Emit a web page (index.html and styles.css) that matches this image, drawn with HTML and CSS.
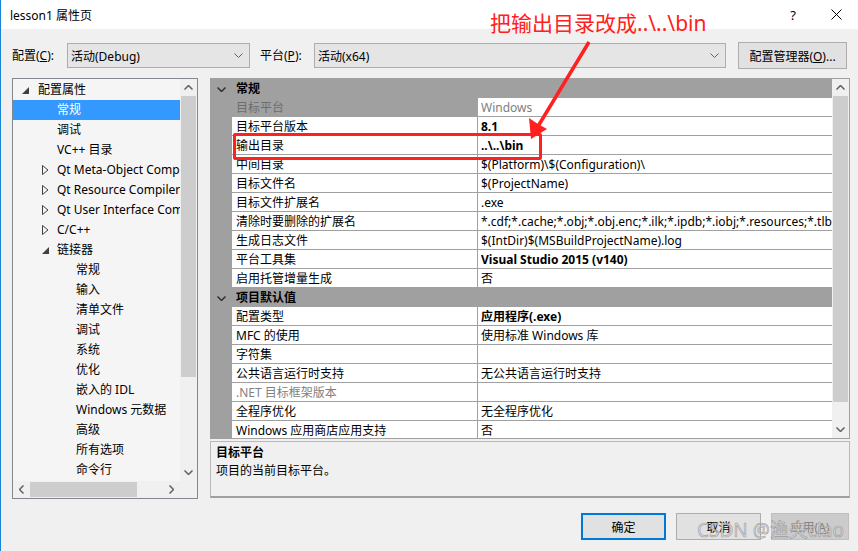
FILE: index.html
```html
<!DOCTYPE html>
<html lang="zh-CN">
<head>
    <meta charset="UTF-8">
    <title>lesson1 属性页</title>
    <link rel="stylesheet" href="styles.css">
</head>
<body>
<div class="window">
    <!-- 标题栏 -->
    <div class="titlebar">
        <span class="title">lesson1 属性页</span>
        <span class="help">?</span>
        <svg class="close" width="11" height="11" viewBox="0 0 11 11"><path d="M0.5 0.5 L10.5 10.5 M10.5 0.5 L0.5 10.5" stroke="#000" stroke-width="1"/></svg>
    </div>

    <!-- 配置 / 平台 -->
    <div class="toolbar">
        <span class="label label-config">配置(<u>C</u>):</span>
        <div class="combo combo-config">
            <span>活动(Debug)</span>
            <svg class="chev" width="9" height="5" viewBox="0 0 9 5"><path d="M0.5 0.5 L4.5 4.5 L8.5 0.5" fill="none" stroke="#606060"/></svg>
        </div>
        <span class="label label-platform">平台(<u>P</u>):</span>
        <div class="combo combo-platform">
            <span>活动(x64)</span>
            <svg class="chev" width="9" height="5" viewBox="0 0 9 5"><path d="M0.5 0.5 L4.5 4.5 L8.5 0.5" fill="none" stroke="#606060"/></svg>
        </div>
        <button class="btn btn-manager">配置管理器(<u>O</u>)...</button>
    </div>

    <div class="main">
        <!-- 左侧树 -->
        <div class="tree">
            <div class="tree-body">
                <ul class="tree-list">
                    <li class="lv1"><span class="exp"><svg width="7" height="7" viewBox="0 0 7 7"><path d="M7 0 L7 7 L0 7 Z" fill="#404040"/></svg></span>配置属性</li>
                    <li class="lv2 selected"><span class="exp"></span>常规</li>
                    <li class="lv2"><span class="exp"></span>调试</li>
                    <li class="lv2"><span class="exp"></span>VC++ 目录</li>
                    <li class="lv2"><span class="exp"><svg width="7" height="10" viewBox="0 0 7 10"><path d="M0.5 0.5 L6 5 L0.5 9.5 Z" fill="none" stroke="#404040"/></svg></span>Qt Meta-Object Compiler</li>
                    <li class="lv2"><span class="exp"><svg width="7" height="10" viewBox="0 0 7 10"><path d="M0.5 0.5 L6 5 L0.5 9.5 Z" fill="none" stroke="#404040"/></svg></span>Qt Resource Compiler</li>
                    <li class="lv2"><span class="exp"><svg width="7" height="10" viewBox="0 0 7 10"><path d="M0.5 0.5 L6 5 L0.5 9.5 Z" fill="none" stroke="#404040"/></svg></span>Qt User Interface Compiler</li>
                    <li class="lv2"><span class="exp"><svg width="7" height="10" viewBox="0 0 7 10"><path d="M0.5 0.5 L6 5 L0.5 9.5 Z" fill="none" stroke="#404040"/></svg></span>C/C++</li>
                    <li class="lv2"><span class="exp"><svg width="7" height="7" viewBox="0 0 7 7"><path d="M7 0 L7 7 L0 7 Z" fill="#404040"/></svg></span>链接器</li>
                    <li class="lv3"><span class="exp"></span>常规</li>
                    <li class="lv3"><span class="exp"></span>输入</li>
                    <li class="lv3"><span class="exp"></span>清单文件</li>
                    <li class="lv3"><span class="exp"></span>调试</li>
                    <li class="lv3"><span class="exp"></span>系统</li>
                    <li class="lv3"><span class="exp"></span>优化</li>
                    <li class="lv3"><span class="exp"></span>嵌入的 IDL</li>
                    <li class="lv3"><span class="exp"></span>Windows 元数据</li>
                    <li class="lv3"><span class="exp"></span>高级</li>
                    <li class="lv3"><span class="exp"></span>所有选项</li>
                    <li class="lv3"><span class="exp"></span>命令行</li>
                </ul>
                <div class="vscroll tree-vscroll">
                    <div class="arrow"><svg width="9" height="5" viewBox="0 0 9 5"><path d="M0.5 4.5 L4.5 0.5 L8.5 4.5" fill="none" stroke="#606060" stroke-width="1.5"/></svg></div>
                    <div class="thumb"></div>
                    <div class="track"></div>
                    <div class="arrow"><svg width="9" height="5" viewBox="0 0 9 5"><path d="M0.5 0.5 L4.5 4.5 L8.5 0.5" fill="none" stroke="#606060" stroke-width="1.5"/></svg></div>
                </div>
            </div>
            <div class="hscroll">
                <div class="harrow"><svg width="5" height="9" viewBox="0 0 5 9"><path d="M4.5 0.5 L0.5 4.5 L4.5 8.5" fill="none" stroke="#606060" stroke-width="1.5"/></svg></div>
                <div class="hthumb"></div>
                <div class="htrack"></div>
                <div class="harrow"><svg width="5" height="9" viewBox="0 0 5 9"><path d="M0.5 0.5 L4.5 4.5 L0.5 8.5" fill="none" stroke="#606060" stroke-width="1.5"/></svg></div>
                <div class="corner"></div>
            </div>
        </div>

        <!-- 右侧属性表 -->
        <div class="right">
            <div class="grid">
                <div class="grid-rows">
                    <div class="row header">
                        <span class="margin"><svg width="9" height="5" viewBox="0 0 9 5"><path d="M0.5 0.5 L4.5 4.5 L8.5 0.5" fill="none" stroke="#303030" stroke-width="1.5"/></svg></span>
                        <span class="cat">常规</span>
                    </div>
                    <div class="row inactive"><span class="margin"></span><span class="name">目标平台</span><span class="value gray">Windows</span></div>
                    <div class="row"><span class="margin"></span><span class="name">目标平台版本</span><span class="value bold">8.1</span></div>
                    <div class="row"><span class="margin"></span><span class="name">输出目录</span><span class="value bold">..\..\bin</span></div>
                    <div class="row"><span class="margin"></span><span class="name">中间目录</span><span class="value">$(Platform)\$(Configuration)\</span></div>
                    <div class="row"><span class="margin"></span><span class="name">目标文件名</span><span class="value">$(ProjectName)</span></div>
                    <div class="row"><span class="margin"></span><span class="name">目标文件扩展名</span><span class="value">.exe</span></div>
                    <div class="row"><span class="margin"></span><span class="name">清除时要删除的扩展名</span><span class="value">*.cdf;*.cache;*.obj;*.obj.enc;*.ilk;*.ipdb;*.iobj;*.resources;*.tlb;*.tli;*.tlh;*.tmp</span></div>
                    <div class="row"><span class="margin"></span><span class="name">生成日志文件</span><span class="value">$(IntDir)$(MSBuildProjectName).log</span></div>
                    <div class="row"><span class="margin"></span><span class="name">平台工具集</span><span class="value bold">Visual Studio 2015 (v140)</span></div>
                    <div class="row"><span class="margin"></span><span class="name">启用托管增量生成</span><span class="value">否</span></div>
                    <div class="row header">
                        <span class="margin"><svg width="9" height="5" viewBox="0 0 9 5"><path d="M0.5 0.5 L4.5 4.5 L8.5 0.5" fill="none" stroke="#303030" stroke-width="1.5"/></svg></span>
                        <span class="cat">项目默认值</span>
                    </div>
                    <div class="row"><span class="margin"></span><span class="name">配置类型</span><span class="value bold">应用程序(.exe)</span></div>
                    <div class="row"><span class="margin"></span><span class="name">MFC 的使用</span><span class="value">使用标准 Windows 库</span></div>
                    <div class="row"><span class="margin"></span><span class="name">字符集</span><span class="value"></span></div>
                    <div class="row"><span class="margin"></span><span class="name">公共语言运行时支持</span><span class="value">无公共语言运行时支持</span></div>
                    <div class="row"><span class="margin"></span><span class="name gray">.NET 目标框架版本</span><span class="value"></span></div>
                    <div class="row"><span class="margin"></span><span class="name">全程序优化</span><span class="value">无全程序优化</span></div>
                    <div class="row"><span class="margin"></span><span class="name">Windows 应用商店应用支持</span><span class="value">否</span></div>
                </div>
                <div class="vscroll grid-vscroll">
                    <div class="arrow"><svg width="9" height="5" viewBox="0 0 9 5"><path d="M0.5 4.5 L4.5 0.5 L8.5 4.5" fill="none" stroke="#606060" stroke-width="1.5"/></svg></div>
                    <div class="thumb"></div>
                    <div class="track"></div>
                    <div class="arrow"><svg width="9" height="5" viewBox="0 0 9 5"><path d="M0.5 0.5 L4.5 4.5 L8.5 0.5" fill="none" stroke="#606060" stroke-width="1.5"/></svg></div>
                </div>
            </div>
            <div class="desc">
                <div class="desc-title">目标平台</div>
                <div class="desc-text">项目的当前目标平台。</div>
            </div>
        </div>
    </div>

    <!-- 底部按钮 -->
    <div class="footer">
        <button class="btn btn-ok">确定</button>
        <button class="btn btn-cancel">取消</button>
        <button class="btn btn-apply" disabled>应用(<u>A</u>)</button>
    </div>

    <!-- 截图上的标注 -->
    <div class="note">把输出目录改成..\..\bin</div>
    <div class="mark-box"></div>
    <svg class="arrow-mark" width="858" height="551" viewBox="0 0 858 551">
        <line x1="589" y1="42" x2="537" y2="128" stroke="#ff2020" stroke-width="3.5"/>
        <polygon points="531,139 529,118 538,124 547,129" fill="#ff2020"/>
    </svg>
    <div class="watermark">CSDN @渔夫ciao</div>
</div>
</body>
</html>
```

FILE: styles.css
```css
/* 基本 */
body {
    margin: 0;
    font-family: "Noto Sans", "Noto Sans CJK SC", sans-serif;
    font-size: 12px;
    color: #000;
}

.window {
    position: relative;
    width: 858px;
    height: 551px;
    box-sizing: border-box;
    border-left: 1px solid #1883d7;
    background-color: #f0f0f0;
    overflow: hidden;
}

/* 标题栏 */
.titlebar {
    height: 29px;
    background-color: #fff;
    display: flex;
    align-items: center;
    padding-left: 9px;
}

.title {
    font-size: 12px;
}

.help {
    margin-left: auto;
    margin-right: 35px;
    font-size: 13px;
}

.close {
    margin-right: 16px;
}

/* 工具栏 */
.toolbar {
    height: 46px;
    box-sizing: border-box;
    padding: 14px 0 0 11px;
    display: flex;
    align-items: flex-start;
}

.label {
    line-height: 25px;
    white-space: nowrap;
}

.label-config {
    width: 55px;
}

.label-platform {
    margin-left: 10px;
    width: 54px;
}

.combo {
    height: 25px;
    box-sizing: border-box;
    border: 1px solid #adadad;
    background-color: #e5e5e5;
    display: flex;
    align-items: center;
    padding: 0 6px 0 3px;
}

.combo span {
    flex: 1;
}

.combo-config {
    width: 183px;
}

.combo-platform {
    width: 412px;
}

.btn {
    font-family: "Noto Sans", "Noto Sans CJK SC", sans-serif;
    font-size: 12px;
    color: #000;
    background-color: #e1e1e1;
    border: 1px solid #adadad;
    box-sizing: border-box;
    padding: 0;
}

.btn-manager {
    margin-left: 12px;
    margin-top: -1px;
    width: 109px;
    height: 27px;
}

/* 主体 */
.main {
    display: flex;
    padding-left: 11px;
    margin-top: 3px;
}

/* 左侧树 */
.tree {
    width: 186px;
    height: 421px;
    box-sizing: border-box;
    border: 1px solid #828790;
    background-color: #f5f5f5;
    display: flex;
    flex-direction: column;
}

.tree-body {
    flex: 1;
    display: flex;
    min-height: 0;
}

.tree-list {
    list-style: none;
    margin: 0;
    padding: 1px 0 0;
    flex: 1;
    min-width: 0;
    overflow: hidden;
}

.tree-list li {
    height: 20px;
    line-height: 20px;
    display: flex;
    align-items: center;
    white-space: nowrap;
}

.tree-list .exp {
    flex: none;
    display: flex;
    align-items: center;
}

.tree-list .lv1 { padding-left: 9px; }
.tree-list .lv1 .exp { width: 16px; }
.tree-list .lv2 { padding-left: 29px; }
.tree-list .lv2 .exp { width: 15px; }
.tree-list .lv3 { padding-left: 48px; }
.tree-list .lv3 .exp { width: 15px; }

.tree-list .selected {
    background-color: #3399ff;
    color: #fff;
}

/* 滚动条 */
.vscroll {
    width: 17px;
    flex: none;
    background-color: #f0f0f0;
    display: flex;
    flex-direction: column;
}

.vscroll .arrow {
    height: 17px;
    display: flex;
    align-items: center;
    justify-content: center;
}

.vscroll .thumb {
    background-color: #cdcdcd;
    margin: 0 1px;
}

.vscroll .track {
    flex: 1;
}

.tree-vscroll .thumb {
    height: 281px;
}

.grid-vscroll .thumb {
    height: 306px;
}

.hscroll {
    height: 17px;
    flex: none;
    display: flex;
    background-color: #f0f0f0;
}

.harrow {
    width: 17px;
    display: flex;
    align-items: center;
    justify-content: center;
}

.hthumb {
    width: 107px;
    margin: 1px 0;
    background-color: #cdcdcd;
}

.htrack {
    flex: 1;
}

.corner {
    width: 17px;
}

/* 右侧 */
.right {
    margin-left: 12px;
    width: 640px;
    display: flex;
    flex-direction: column;
}

.grid {
    height: 361px;
    box-sizing: border-box;
    border: 1px solid #a0a0a0;
    background-color: #fff;
    display: flex;
}

.grid-rows {
    flex: 1;
    min-width: 0;
    overflow: hidden;
}

.row {
    display: grid;
    grid-template-columns: 21px 246px 1fr;
    height: 19px;
    line-height: 19px;
    white-space: nowrap;
}

.row .margin {
    background-color: #a0a0a0;
    display: flex;
    align-items: center;
    justify-content: center;
}

.row .name {
    padding-left: 4px;
    border-right: 1px solid #a0a0a0;
    border-bottom: 1px solid #a0a0a0;
    overflow: hidden;
}

.row .value {
    padding-left: 3px;
    border-bottom: 1px solid #a0a0a0;
    overflow: hidden;
}

.row.header {
    background-color: #a0a0a0;
    grid-template-columns: 21px 1fr;
}

.row .cat {
    padding-left: 4px;
    font-weight: bold;
    line-height: 20px;
}

.row.inactive .name {
    background-color: #a0a0a0;
    color: #6d6d6d;
}

.gray {
    color: #808080;
}

.bold {
    font-weight: bold;
}

/* 说明栏 */
.desc {
    margin-top: 2px;
    height: 57px;
    box-sizing: border-box;
    border: 1px solid #b9b9b9;
    border-bottom: 2px solid #a0a0a0;
    padding: 2px 5px;
}

.desc-title {
    font-weight: bold;
    line-height: 18px;
}

.desc-text {
    line-height: 18px;
}

/* 底部按钮 */
.footer {
    display: flex;
    justify-content: flex-end;
    padding: 14px 9px 0 0;
    gap: 10px;
}

.footer .btn {
    height: 27px;
}

.btn-ok {
    width: 85px;
    border: 2px solid #0078d7;
}

.btn-cancel {
    width: 85px;
}

.btn-apply {
    width: 78px;
    background-color: #cccccc;
    border-color: #bfbfbf;
    color: #838383;
}

/* 标注 */
.note {
    position: absolute;
    left: 489px;
    top: 9px;
    font-size: 21px;
    line-height: 28px;
    color: #ff2020;
    white-space: nowrap;
}

.mark-box {
    position: absolute;
    left: 232px;
    top: 133px;
    width: 309px;
    height: 27px;
    box-sizing: border-box;
    border: 3px solid #ff2020;
    border-radius: 2px;
}

.arrow-mark {
    position: absolute;
    left: -1px;
    top: 0;
    pointer-events: none;
}

.watermark {
    position: absolute;
    left: 696px;
    top: 518px;
    font-size: 19px;
    line-height: 24px;
    color: rgba(215, 215, 215, 0.75);
    -webkit-text-stroke: 0.6px rgba(130, 130, 130, 0.7);
    white-space: nowrap;
}
```
